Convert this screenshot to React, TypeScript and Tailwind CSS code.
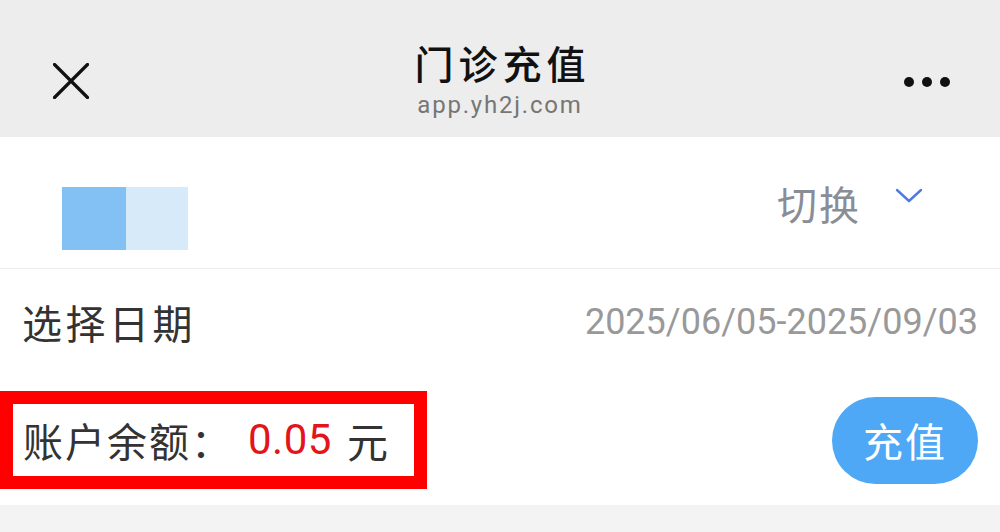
import React from "react";

const cjk = '"Noto Sans CJK SC", "Noto Sans", sans-serif';
const num = 'Roboto, "Noto Sans CJK SC", sans-serif';

export default function App() {
  return (
    <div className="w-[1000px] h-[532px] overflow-hidden bg-[#f3f3f3] flex flex-col" style={{ fontFamily: cjk }}>
      {/* Header */}
      <div className="h-[137px] bg-[#ededed] grid grid-cols-[1fr_auto_1fr] items-start">
        <div className="pl-[53px] pt-[63px]">
          <svg width="36" height="36" viewBox="0 0 36 36">
            <path d="M1.5 1.5 L34.5 34.5 M34.5 1.5 L1.5 34.5" stroke="#111" strokeWidth="3.2" strokeLinecap="round" />
          </svg>
        </div>
        <div className="flex flex-col items-center pt-[40px]">
          <div className="text-[39px] leading-[44px] font-medium text-[#111] tracking-[5px] pl-[5px]">门诊充值</div>
          <div className="mt-[7px] text-[24px] leading-[28px] text-[#767676] tracking-[1.8px]" style={{ fontFamily: num }}>
            app.yh2j.com
          </div>
        </div>
        <div className="flex justify-end pr-[50px] pt-[77px] gap-[8px]">
          <span className="w-[10px] h-[10px] rounded-full bg-[#111]" />
          <span className="w-[10px] h-[10px] rounded-full bg-[#111]" />
          <span className="w-[10px] h-[10px] rounded-full bg-[#111]" />
        </div>
      </div>

      {/* White card */}
      <div className="bg-white flex flex-col">
        {/* Row 1 */}
        <div className="h-[132px] border-b border-[#ececec] flex items-start justify-between">
          <div className="ml-[62px] mt-[50px] flex">
            <div className="w-[64px] h-[63px] bg-[#83c1f5]" />
            <div className="w-[62px] h-[63px] bg-[#d6eafa]" />
          </div>
          <div className="mt-[44px] mr-[77px] flex items-center gap-[34px]">
            <span className="text-[40px] leading-[44px] tracking-[2px] text-[#8a8c96]">切换</span>
            <svg width="28" height="16" viewBox="0 0 28 16" className="-mt-[14px]">
              <path d="M2 2 L14 13 L26 2" fill="none" stroke="#4f7be0" strokeWidth="2.4" strokeLinecap="round" strokeLinejoin="round" />
            </svg>
          </div>
        </div>

        {/* Row 2 */}
        <div className="h-[106px] flex items-center justify-between pl-[22px] pr-[22px]">
          <span className="text-[40px] leading-[48px] tracking-[3.5px] text-[#333]">选择日期</span>
          <span className="text-[36px] leading-[44px] text-[#999]" style={{ fontFamily: num }}>
            2025/06/05-2025/09/03
          </span>
        </div>

        {/* Row 3 */}
        <div className="h-[130px] flex items-center justify-between pr-[22px]">
          <div className="w-[427px] h-[98px] border-[13px] border-[#ff0000] flex items-center pl-[10px]">
            <span className="text-[40px] leading-[48px] tracking-[2px] text-[#333]">账户余额：</span>
            <span className="ml-[15px] text-[42px] leading-[48px] text-[#e3141a] tracking-[0.5px]" style={{ fontFamily: num }}>
              0.05
            </span>
            <span className="ml-[15px] text-[41px] leading-[48px] text-[#333]">元</span>
          </div>
          <button className="w-[146px] h-[87px] rounded-full bg-[#4ea8f6] text-white text-[40px] leading-[48px] tracking-[2px] flex items-center justify-center">
            充值
          </button>
        </div>
      </div>
    </div>
  );
}
